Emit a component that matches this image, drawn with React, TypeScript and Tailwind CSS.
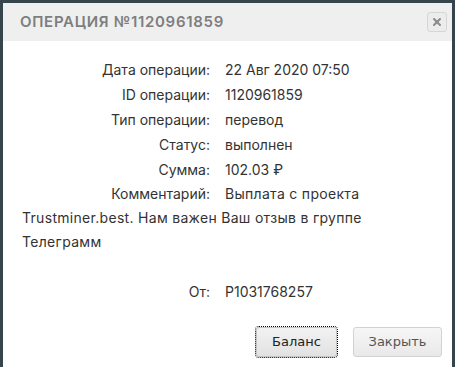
import { X } from "lucide-react";

const rows: [string, string][] = [
  ["Дата операции:", "22 Авг 2020 07:50"],
  ["ID операции:", "1120961859"],
  ["Тип операции:", "перевод"],
  ["Статус:", "выполнен"],
  ["Сумма:", "102.03 ₽"],
];

export default function App() {
  return (
    <div className="w-[455px] h-[367px] bg-[#36444c] pt-[3px] px-[3px] overflow-hidden">
      <div className="h-full bg-white flex flex-col">
        {/* HEADER */}
        <div className="h-[38px] bg-[#efefef] flex items-center justify-between pl-[17px] pr-[5px]">
          <span className="font-['Inter',sans-serif] font-semibold text-[15px] tracking-[0.7px] text-[#7e7e7e]">
            ОПЕРАЦИЯ №1120961859
          </span>
          <button className="w-[20px] h-[20px] rounded-[3px] border border-[#d6d6d6] bg-[#ececec] flex items-center justify-center">
            <X className="w-[12px] h-[12px] text-[#8a8a8a]" strokeWidth={4} />
          </button>
        </div>

        {/* BODY */}
        <div className="pt-[16px] pl-[19px] pr-[30px] font-['Inter',sans-serif] text-[14px] leading-[25px] text-[#333]">
          {rows.map(([label, value]) => (
            <div key={label} className="flex">
              <span className="w-[188px] text-right">{label}</span>
              <span className="ml-[15px]">{value}</span>
            </div>
          ))}
          <p className="leading-[24px] tracking-[0.3px]">
            <span className="inline-block w-[203px] pr-[15px] text-right tracking-normal">Комментарий:</span>
            Выплата с проекта Trustminer.best. Нам важен Ваш отзыв в группе Телеграмм
          </p>
          <div className="h-[25px]" />
          <div className="flex">
            <span className="w-[188px] text-right">От:</span>
            <span className="ml-[15px]">P1031768257</span>
          </div>
        </div>

        {/* FOOTER */}
        <div className="flex justify-end gap-[16px] pr-[10px] mt-[23px] font-['DejaVu_Sans',sans-serif] text-[13px]">
          <button className="w-[81px] h-[30px] rounded-[3px] border border-[#c4c4c4] bg-gradient-to-b from-[#f2f2f2] to-[#e2e2e2] text-[#222] outline-1 outline-dotted outline-black outline-offset-0">
            Баланс
          </button>
          <button className="w-[89px] h-[30px] rounded-[3px] border border-[#d2d2d2] bg-gradient-to-b from-[#f6f6f6] to-[#e9e9e9] text-[#555]">
            Закрыть
          </button>
        </div>
      </div>
    </div>
  );
}
